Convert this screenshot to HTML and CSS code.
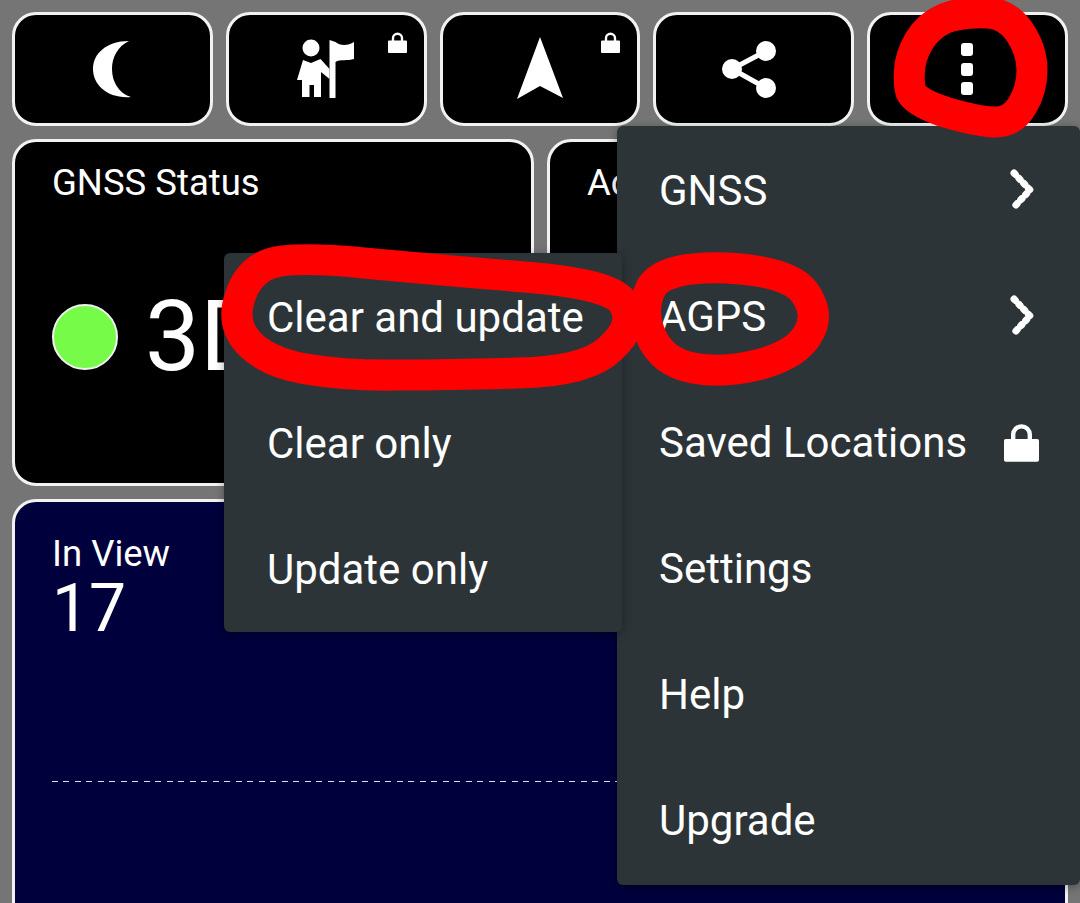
FILE: index.html
```html
<!DOCTYPE html>
<html lang="en">
<head>
  <meta charset="UTF-8">
  <meta name="viewport" content="width=device-width, initial-scale=1">
  <title>GNSS Status</title>
  <link rel="stylesheet" href="styles.css">
</head>
<body>

  <div class="toolbar">
    <button class="tool">
      <svg class="icon" viewBox="0 0 60 60"><path d="M47 2C24 2 11 15 11 30C11 46 26 60 49 58C36 54 30 42 30 30C30 18 36 7 47 2Z"/></svg>
    </button>
    <button class="tool">
      <svg class="icon" viewBox="0 0 60 60">
        <circle cx="15" cy="9" r="8.500"/>
        <path d="M7 21L15 24L24.500 20L33.500 30L33.500 40L25 33L25 58L18 58L18 46L13.500 46L13.500 58L6 58L6 41L1 41Z"/>
        <path d="M33.500 1L39.500 3C44 7 52 7 58 3L58 20C52 22 44 20 39.500 23L39.500 59L33.500 59Z"/>
      </svg>
      <svg class="lock-small" viewBox="0 0 20 22"><path d="M4 9V6.500A6 6 0 0 1 16 6.500V9H19A1 1 0 0 1 20 10V21A1 1 0 0 1 19 22H1A1 1 0 0 1 0 21V10A1 1 0 0 1 1 9ZM6.500 9H13.500V6.500A3.500 3.500 0 0 0 6.500 6.500Z"/></svg>
    </button>
    <button class="tool">
      <svg class="icon" viewBox="0 0 60 60"><path d="M30 -2L53 59L30 47L7 60Z"/></svg>
      <svg class="lock-small" viewBox="0 0 20 22"><path d="M4 9V6.500A6 6 0 0 1 16 6.500V9H19A1 1 0 0 1 20 10V21A1 1 0 0 1 19 22H1A1 1 0 0 1 0 21V10A1 1 0 0 1 1 9ZM6.500 9H13.500V6.500A3.500 3.500 0 0 0 6.500 6.500Z"/></svg>
    </button>
    <button class="tool">
      <svg class="icon" viewBox="0 0 60 60">
        <path class="share-line" d="M42 12L8 30L42 49"/>
        <circle cx="8" cy="30" r="10"/>
        <circle cx="42" cy="12" r="10"/>
        <circle cx="42" cy="49" r="10"/>
      </svg>
    </button>
    <button class="tool">
      <svg class="icon" viewBox="0 0 60 60">
        <rect x="23" y="4" width="12" height="13" rx="3"/>
        <rect x="23" y="24" width="12" height="13" rx="3"/>
        <rect x="23" y="43" width="12" height="13" rx="3"/>
      </svg>
    </button>
  </div>

  <div class="cards">
    <div class="card">
      <div class="card-title">GNSS Status</div>
      <div class="status">
        <span class="dot"></span>
        <span class="fix">3D</span>
      </div>
    </div>
    <div class="card">
      <div class="card-title">Accuracy</div>
    </div>
  </div>

  <div class="sky">
    <div class="sky-label">In View</div>
    <div class="sky-count">17</div>
    <div class="sky-line"></div>
  </div>

  <ul class="menu menu-main">
    <li>GNSS <svg class="chevron" viewBox="0 0 26 42"><path d="M5 4L21 21L5 38"/></svg></li>
    <li>AGPS <svg class="chevron" viewBox="0 0 26 42"><path d="M5 4L21 21L5 38"/></svg></li>
    <li>Saved Locations <svg class="lock-big" viewBox="0 0 20 22"><path d="M4 9V6.500A6 6 0 0 1 16 6.500V9H19A1 1 0 0 1 20 10V21A1 1 0 0 1 19 22H1A1 1 0 0 1 0 21V10A1 1 0 0 1 1 9ZM6.500 9H13.500V6.500A3.500 3.500 0 0 0 6.500 6.500Z"/></svg></li>
    <li>Settings</li>
    <li>Help</li>
    <li>Upgrade</li>
  </ul>

  <ul class="menu menu-sub">
    <li>Clear and update</li>
    <li>Clear only</li>
    <li>Update only</li>
  </ul>

  <svg class="scribbles" viewBox="0 0 1080 903">
    <path d="M987 13Q1006 13 1019 31Q1032 50 1032 70Q1032 90 1022 106Q1012 123 993 122Q975 121 945 112Q915 102 911 92Q908 82 910 65Q913 48 924 34Q936 20 952 16Q968 12 987 13Z"/>
    <path d="M364 263Q439 270 525 277Q614 284 624 304Q636 325 611 348Q587 372 517 373Q449 375 398 375Q347 376 306 369Q266 362 248 342Q231 323 240 297Q248 272 269 264Q290 256 364 263Z"/>
    <path d="M726 268Q790 271 805 293Q820 315 808 334Q797 354 761 364Q725 374 693 368Q662 362 651 336Q640 310 651 288Q663 266 726 268Z"/>
  </svg>

</body>
</html>
```

FILE: styles.css
```css
* {
  box-sizing: border-box;
}

html, body {
  height: 903px;
  overflow: hidden;
}

body {
  margin: 0;
  padding: 12px 12px 0;
  background: #757575;
  color: #fff;
  font-family: Roboto, "Liberation Sans", sans-serif;
  position: relative;
}

.toolbar {
  display: flex;
  gap: 13px;
}

.tool {
  position: relative;
  flex: 1;
  height: 114px;
  padding: 0;
  background: #000;
  border: 3px solid #f2f2f2;
  border-radius: 24px;
  display: flex;
  align-items: center;
  justify-content: center;
}

.icon {
  width: 60px;
  height: 60px;
  fill: #fff;
  overflow: visible;
}

.share-line {
  fill: none;
  stroke: #fff;
  stroke-width: 5;
}

.lock-small {
  position: absolute;
  top: 17px;
  right: 17px;
  width: 19px;
  height: 21px;
  fill: #fff;
}

.cards {
  display: grid;
  grid-template-columns: 522px 1fr;
  gap: 13px;
  margin-top: 13px;
}

.card {
  height: 347px;
  padding: 21px 37px;
  background: #000;
  border: 3px solid #f2f2f2;
  border-radius: 24px;
}

.card-title {
  font-size: 36.500px;
  line-height: 40px;
}

.status {
  display: flex;
  align-items: center;
  gap: 27px;
  margin-top: 76px;
}

.dot {
  width: 66px;
  height: 66px;
  background: #76fb49;
  border: 2px solid #f2f2f2;
  border-radius: 50%;
}

.fix {
  font-size: 98px;
  line-height: 115px;
}

.sky {
  height: 440px;
  margin-top: 13px;
  padding: 32px 37px;
  background: #00003c;
  border: 3px solid #f2f2f2;
  border-radius: 24px;
}

.sky-label {
  font-size: 36.500px;
  line-height: 40px;
}

.sky-count {
  font-size: 66px;
  line-height: 70px;
}

.sky-line {
  height: 1px;
  margin-top: 137px;
  background: repeating-linear-gradient(to right, #dcdaf8 0 6px, transparent 6px 11.500px);
}

.menu {
  position: absolute;
  margin: 0;
  padding: 1px 0;
  list-style: none;
  background: #2d3437;
  border-radius: 6px;
  box-shadow: 0 2px 10px rgba(0, 0, 0, 0.35);
}

.menu li {
  height: 126px;
  display: flex;
  align-items: center;
  justify-content: space-between;
  padding-left: 43px;
  font-size: 42px;
}

.menu-main {
  top: 126px;
  left: 617px;
  width: 463px;
  height: 759px;
}

.menu-main li {
  padding-left: 42px;
}

.menu-sub {
  top: 253px;
  left: 224px;
  width: 398px;
  height: 379px;
}

.chevron {
  width: 26px;
  height: 42px;
  margin-right: 45px;
  fill: none;
  stroke: #fff;
  stroke-width: 7;
  stroke-linecap: round;
  stroke-dasharray: 2 5;
}

.lock-big {
  width: 35px;
  height: 39px;
  margin-right: 41px;
  fill: #fff;
}

.scribbles {
  position: absolute;
  top: 0;
  left: 0;
  width: 1080px;
  height: 903px;
  fill: none;
  stroke: #fe0000;
  stroke-width: 31;
  stroke-linejoin: round;
}
```
